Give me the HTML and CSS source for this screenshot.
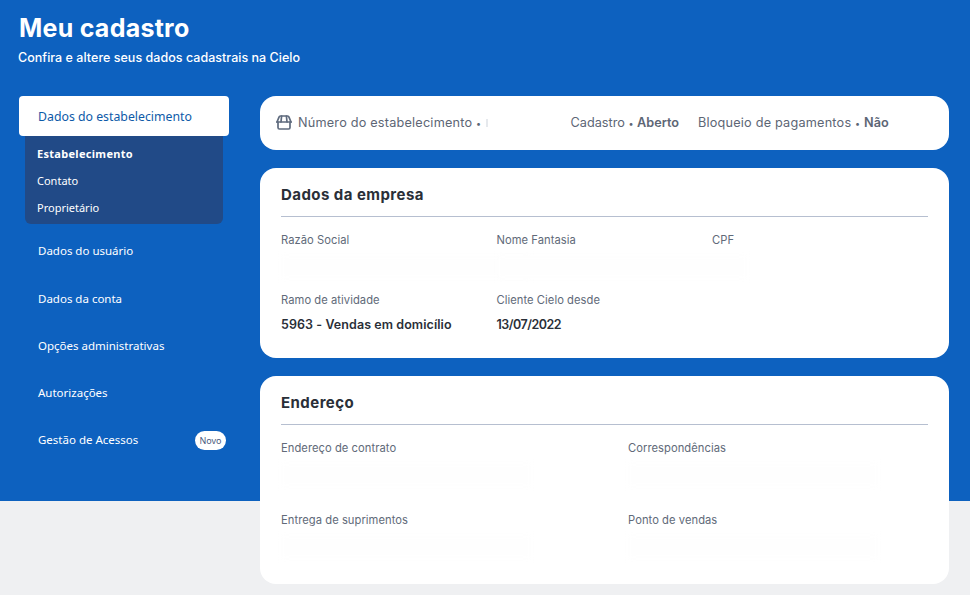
FILE: index.html
```html
<!DOCTYPE html>
<html lang="pt-BR">
<head>
<meta charset="utf-8">
<title>Meu cadastro</title>
<link rel="stylesheet" href="styles.css">
</head>
<body>
<div class="page">
  <header class="head">
    <h1>Meu cadastro</h1>
    <p>Confira e altere seus dados cadastrais na Cielo</p>
  </header>
  <div class="layout">
    <nav class="side">
      <div class="side-active">Dados do estabelecimento</div>
      <ul class="sub">
        <li class="sub-on">Estabelecimento</li>
        <li>Contato</li>
        <li>Proprietário</li>
      </ul>
      <ul class="menu">
        <li>Dados do usuário</li>
        <li>Dados da conta</li>
        <li>Opções administrativas</li>
        <li>Autorizações</li>
        <li>Gestão de Acessos <span class="badge">Novo</span></li>
      </ul>
    </nav>
    <main class="main">
      <section class="card status">
        <svg class="ico" width="16" height="16" viewBox="0 0 16 16" fill="none" stroke="#5f6b7e" stroke-width="1.7" stroke-linejoin="round" stroke-linecap="round">
          <path d="M1 8 3 3.200A1.600 1.600 0 0 1 4.500 2h7A1.600 1.600 0 0 1 13 3.200L15 8"/>
          <path d="M5.600 2 5 8M10.400 2l.6 6"/>
          <path d="M.9 8h14.200"/>
          <path d="M2 8v5.600A1.400 1.400 0 0 0 3.400 15h9.200a1.400 1.400 0 0 0 1.400-1.400V8"/>
        </svg>
        <span class="st st-num">Número do estabelecimento <i>•</i><span class="cut"></span></span>
        <span class="st st-cad">Cadastro <i>•</i> <b>Aberto</b></span>
        <span class="st">Bloqueio de pagamentos <i>•</i> <b>Não</b></span>
      </section>
      <section class="card company">
        <h2>Dados da empresa</h2>
        <div class="grid three">
          <div class="field short"><label>Razão Social</label><strong class="hidden"></strong></div>
          <div class="field short"><label>Nome Fantasia</label><strong class="hidden"></strong></div>
          <div class="field short"><label>CPF</label></div>
          <div class="field short"><label>Ramo de atividade</label><strong>5963 - Vendas em domicílio</strong></div>
          <div class="field short"><label>Cliente Cielo desde</label><strong class="date">13/07/2022</strong></div>
        </div>
      </section>
      <section class="card address">
        <h2>Endereço</h2>
        <div class="grid two">
          <div class="field"><label>Endereço de contrato</label><strong class="hidden"></strong></div>
          <div class="field"><label>Correspondências</label><strong class="hidden"></strong></div>
          <div class="field"><label>Entrega de suprimentos</label><strong class="hidden"></strong></div>
          <div class="field"><label>Ponto de vendas</label><strong class="hidden"></strong></div>
        </div>
      </section>
    </main>
  </div>
</div>
</body>
</html>
```

FILE: styles.css
```css
* { box-sizing: border-box; }
html, body { margin: 0; height: 100%; }
body {
  font-family: "Inter", "Liberation Sans", sans-serif;
  overflow: hidden;
}
.page {
  height: 595px;
  padding: 13px 21px 0 19px;
  background: linear-gradient(#0d61bf 501px, #eff0f2 501px);
}
.head { height: 83px; color: #fff; }
.head h1 {
  margin: 0;
  font-size: 25px;
  line-height: 30px;
  font-weight: 700;
  letter-spacing: 0.25px;
}
.head p {
  margin: 6px 0 0 -1px;
  font-size: 12.500px;
  line-height: 18px;
  font-weight: 500;
  letter-spacing: 0.03px;
}
.layout { display: flex; gap: 31px; align-items: flex-start; }
.side { width: 210px; flex: none; font-family: "Noto Sans", sans-serif; }
.side-active {
  height: 40px;
  padding-left: 19px;
  background: #fff;
  border-radius: 4px;
  color: #0d5aa8;
  font-size: 12.300px;
  line-height: 41px;
}
.sub {
  list-style: none;
  margin: 0 6px;
  padding: 4px 0 3px 12px;
  height: 88px;
  background: #214a87;
  border-radius: 0 0 6px 6px;
  color: #fff;
  font-size: 11px;
}
.sub li { height: 27px; line-height: 27px; }
.sub-on { font-weight: 700; letter-spacing: 0.3px; }
.menu {
  list-style: none;
  margin: 3.400px 0 0;
  padding: 0 0 0 19px;
  color: #fff;
  font-size: 11.500px;
}
.menu li { height: 47.200px; line-height: 47.200px; position: relative; }
.badge {
  position: absolute;
  left: 157px;
  top: 14.500px;
  width: 31px;
  height: 19px;
  border-radius: 10px;
  background: #fff;
  color: #4a5a80;
  font-size: 9px;
  line-height: 19px;
  text-align: center;
}
.main { flex: 1; display: flex; flex-direction: column; gap: 18px; min-width: 0; }
.card { background: #fff; border-radius: 16px; }
.status {
  height: 54px;
  display: flex;
  align-items: center;
  padding: 0 0 2px 16px;
  color: #5d6675;
  font-size: 12.700px;
  letter-spacing: 0.2px;
}
.ico { flex: none; margin-right: 6px; }
.st i { font-style: normal; font-size: 9px; }
.st b { font-weight: 600; letter-spacing: 0; }
.st-num { width: 272.500px; }
.st-cad { width: 127.500px; letter-spacing: 0; }
.cut {
  display: inline-block;
  width: 2px;
  height: 8px;
  margin-left: 5px;
  background: #e6e9ed;
}
.company { height: 190px; padding: 18px 21px 0; }
.address { height: 208px; padding: 18px 21px 0; }
h2 {
  margin: 0;
  height: 31px;
  border-bottom: 1px solid #b6bfd0;
  color: #2a2f38;
  font-size: 15px;
  line-height: 18px;
  font-weight: 700;
  letter-spacing: 0.45px;
}
.grid { display: grid; margin-top: 16px; }
.three { grid-template-columns: 215.500px 215.500px 1fr; }
.two { grid-template-columns: 347px 1fr; }
.field { height: 72px; }
.field.short { height: 60px; }
.field label {
  display: block;
  color: #616a79;
  font-size: 11.200px;
  line-height: 14px;
  letter-spacing: 0.05px;
}
.field strong {
  display: block;
  margin-top: 10px;
  color: #2a2f38;
  font-size: 12.500px;
  line-height: 16px;
  font-weight: 600;
  letter-spacing: 0.07px;
}
.field strong.date { letter-spacing: -0.5px; }
.field strong.hidden {
  width: 250px;
  height: 22px;
  margin-top: 9px;
  background: #fefefe;
  filter: blur(3px);
}
```
